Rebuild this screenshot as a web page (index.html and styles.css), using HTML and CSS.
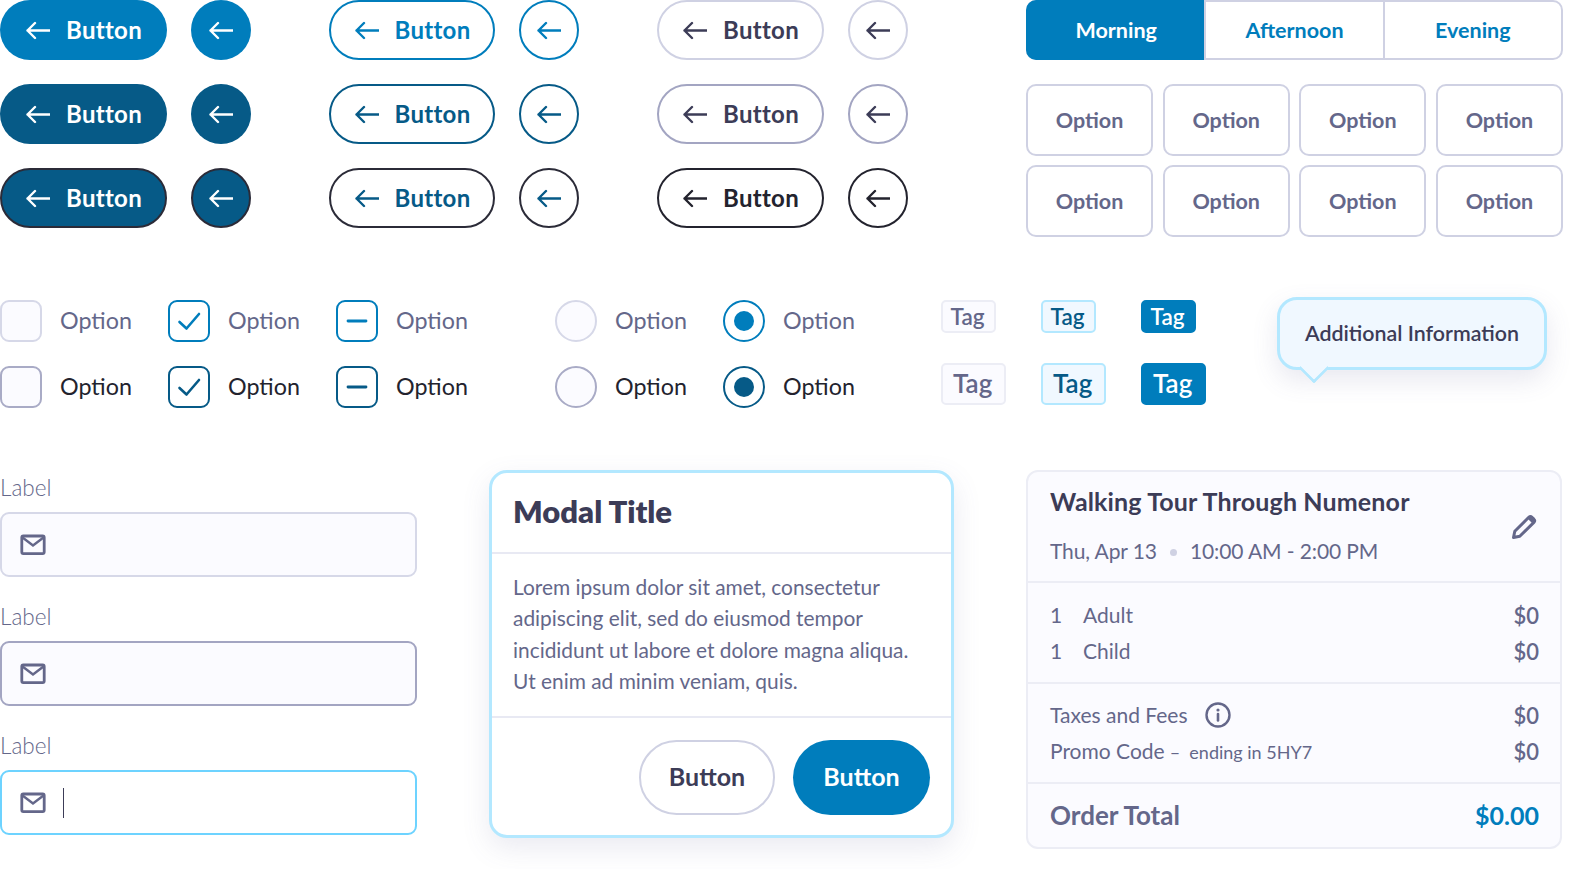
FILE: index.html
```html
<!DOCTYPE html>
<html lang="en">
<head>
<meta charset="utf-8">
<title>UI Kit</title>
<link rel="stylesheet" href="styles.css">
</head>
<body>
<svg class="sprite" aria-hidden="true">
  <symbol id="arrow" viewBox="0 0 24 24"><path d="M24 12.500H1.500M9 5l-7.500 7.500 7.500 7.500" fill="none" stroke="currentColor" stroke-width="2.400" stroke-linecap="round" stroke-linejoin="round"/></symbol>
  <symbol id="mail" viewBox="0 0 26 22"><rect x="1.800" y="2" width="22.400" height="17.600" rx="1.500" fill="none" stroke="currentColor" stroke-width="2.800"/><path d="M2.500 3.500L13 11.500L23.500 3.500" fill="none" stroke="currentColor" stroke-width="2.400"/></symbol>
</svg>
<main class="board">
  <section class="row-top">
    <div class="btn-group">
      <a class="btn fill"><svg class="ico"><use href="#arrow"/></svg><span>Button</span></a><a class="round fill"><svg class="ico"><use href="#arrow"/></svg></a>
      <a class="btn fill-dark"><svg class="ico"><use href="#arrow"/></svg><span>Button</span></a><a class="round fill-dark"><svg class="ico"><use href="#arrow"/></svg></a>
      <a class="btn fill-ink"><svg class="ico"><use href="#arrow"/></svg><span>Button</span></a><a class="round fill-ink"><svg class="ico"><use href="#arrow"/></svg></a>
    </div>
    <div class="btn-group">
      <a class="btn line-blue"><svg class="ico"><use href="#arrow"/></svg><span>Button</span></a><a class="round line-blue"><svg class="ico"><use href="#arrow"/></svg></a>
      <a class="btn line-dark"><svg class="ico"><use href="#arrow"/></svg><span>Button</span></a><a class="round line-dark"><svg class="ico"><use href="#arrow"/></svg></a>
      <a class="btn line-ink"><svg class="ico"><use href="#arrow"/></svg><span>Button</span></a><a class="round line-ink"><svg class="ico"><use href="#arrow"/></svg></a>
    </div>
    <div class="btn-group">
      <a class="btn plain-1"><svg class="ico"><use href="#arrow"/></svg><span>Button</span></a><a class="round plain-1"><svg class="ico"><use href="#arrow"/></svg></a>
      <a class="btn plain-2"><svg class="ico"><use href="#arrow"/></svg><span>Button</span></a><a class="round plain-2"><svg class="ico"><use href="#arrow"/></svg></a>
      <a class="btn plain-3"><svg class="ico"><use href="#arrow"/></svg><span>Button</span></a><a class="round plain-3"><svg class="ico"><use href="#arrow"/></svg></a>
    </div>
    <div class="selectors">
      <div class="segments">
        <span class="segment on">Morning</span><span class="segment">Afternoon</span><span class="segment">Evening</span>
      </div>
      <div class="options">
        <span class="opt">Option</span><span class="opt">Option</span><span class="opt">Option</span><span class="opt">Option</span>
        <span class="opt">Option</span><span class="opt">Option</span><span class="opt">Option</span><span class="opt">Option</span>
      </div>
    </div>
  </section>

  <section class="row-mid">
    <div class="checks">
      <label class="choice"><i class="box"></i>Option</label>
      <label class="choice"><i class="box blue"><svg viewBox="0 0 42 42"><path d="M11.500 22l7 6.500L31 14" fill="none" stroke="currentColor" stroke-width="2.600" stroke-linecap="round" stroke-linejoin="round"/></svg></i>Option</label>
      <label class="choice"><i class="box blue"><svg viewBox="0 0 42 42"><path d="M12 21H30" fill="none" stroke="currentColor" stroke-width="2.800" stroke-linecap="round"/></svg></i>Option</label>
      <label class="choice hover"><i class="box"></i>Option</label>
      <label class="choice hover"><i class="box dark"><svg viewBox="0 0 42 42"><path d="M11.500 22l7 6.500L31 14" fill="none" stroke="currentColor" stroke-width="2.600" stroke-linecap="round" stroke-linejoin="round"/></svg></i>Option</label>
      <label class="choice hover"><i class="box dark"><svg viewBox="0 0 42 42"><path d="M12 21H30" fill="none" stroke="currentColor" stroke-width="2.800" stroke-linecap="round"/></svg></i>Option</label>
    </div>
    <div class="radios">
      <label class="choice"><i class="radio"></i>Option</label>
      <label class="choice"><i class="radio blue"></i>Option</label>
      <label class="choice hover"><i class="radio"></i>Option</label>
      <label class="choice hover"><i class="radio dark"></i>Option</label>
    </div>
    <div class="tags">
      <span class="tag">Tag</span><span class="tag sky">Tag</span><span class="tag solid">Tag</span>
      <span class="tag big">Tag</span><span class="tag big sky">Tag</span><span class="tag big solid">Tag</span>
    </div>
    <div class="tooltip">Additional Information</div>
  </section>

  <section class="row-low">
    <div class="fields">
      <div class="field"><div class="label">Label</div><div class="input"><svg class="mail"><use href="#mail"/></svg></div></div>
      <div class="field"><div class="label">Label</div><div class="input hover"><svg class="mail"><use href="#mail"/></svg></div></div>
      <div class="field"><div class="label">Label</div><div class="input focus"><svg class="mail"><use href="#mail"/></svg><i class="caret"></i></div></div>
    </div>
    <article class="modal">
      <h2 class="modal-title">Modal Title</h2>
      <p class="modal-body">Lorem ipsum dolor sit amet, consectetur adipiscing elit, sed do eiusmod tempor incididunt ut labore et dolore magna aliqua. Ut enim ad minim veniam, quis.</p>
      <div class="modal-foot"><a class="mbtn ghost">Button</a><a class="mbtn primary">Button</a></div>
    </article>
    <article class="summary">
      <header class="sum-head">
        <div>
          <h3 class="sum-title">Walking Tour Through Numenor</h3>
          <div class="sum-when"><span>Thu, Apr 13</span><i class="dot"></i><span>10:00 AM - 2:00 PM</span></div>
        </div>
        <svg class="pencil" viewBox="0 0 26 26"><path d="M2.500 23.500l1.300-6.200L17.800 3.300a2.300 2.300 0 0 1 3.200 0l1.900 1.900a2.300 2.300 0 0 1 0 3.200L8.800 22.300z" fill="none" stroke="currentColor" stroke-width="3" stroke-linejoin="round"/><path d="M16.500 4.500l5 5L24 7l-.5-3.200L20 2z" fill="currentColor"/></svg>
      </header>
      <div class="sum-part first">
        <div class="line"><span><b class="qty">1</b>Adult</span><span class="price">$0</span></div>
        <div class="line"><span><b class="qty">1</b>Child</span><span class="price">$0</span></div>
      </div>
      <div class="sum-part">
        <div class="line"><span class="with-icon">Taxes and Fees<svg class="info" viewBox="0 0 26 26"><circle cx="13" cy="13" r="11.500" fill="none" stroke="currentColor" stroke-width="2.400"/><path d="M13 12v6.500" stroke="currentColor" stroke-width="2.600" stroke-linecap="round"/><circle cx="13" cy="8" r="1.600" fill="currentColor"/></svg></span><span class="price">$0</span></div>
        <div class="line"><span>Promo Code<small class="promo">–&nbsp; ending in 5HY7</small></span><span class="price">$0</span></div>
      </div>
      <footer class="sum-total"><span>Order Total</span><span class="total">$0.00</span></footer>
    </article>
  </section>
</main>
</body>
</html>
```

FILE: styles.css
```css
* { box-sizing: border-box; }
html, body { margin: 0; padding: 0; background: #fff; }
body { font-family: "Lato", "Noto Sans", sans-serif; color: #3c3c57; overflow: hidden; height: 869px; }
.sprite { display: none; }
.board { width: 1571px; height: 869px; }
h2, h3, p { margin: 0; }

/* top row */
.row-top { display: flex; height: 297px; }
.btn-group { display: grid; grid-template-columns: 166.500px 60px; gap: 24px; align-content: start; margin-right: 78px; }
.btn-group:nth-child(3) { margin-right: 118.500px; }
.btn, .round { height: 60px; display: flex; align-items: center; border-radius: 30px; border: 2px solid transparent; font-weight: 700; font-size: 24px; letter-spacing: .3px; }
.btn { padding: 0 0 2px 24px; gap: 16px; }
.round { width: 60px; justify-content: center; }
.ico { width: 24px; height: 24px; flex: none; }
.btn .ico { margin-top: 2px; }
.fill { background: #007dbc; color: #fff; }
.fill-dark { background: #065a87; color: #fff; }
.fill-ink { background: #065a87; color: #fff; border-color: #2b2b38; }
.line-blue { color: #007dbc; border-color: #007dbc; }
.line-dark { color: #065a87; border-color: #065a87; }
.line-ink { color: #065a87; border-color: #2b2b38; }
.plain-1 { color: #3c3c57; border-color: #cfd1e3; }
.plain-2 { color: #3c3c57; border-color: #a3a5c2; }
.plain-3 { color: #23232e; border-color: #23232e; }

.selectors { width: 537px; }
.segments { display: flex; height: 60px; border: 2px solid #cfd1e3; border-radius: 10px; }
.segment { flex: 1; display: flex; align-items: center; justify-content: center; font-weight: 700; font-size: 21.500px; color: #007dbc; }
.segment + .segment { border-left: 2px solid #cfd1e3; }
.segment.on { background: #007dbc; color: #fff; margin: -2px 0 -2px -2px; padding-left: 2px; border-radius: 10px 0 0 10px; }
.options { display: grid; grid-template-columns: repeat(4, 1fr); gap: 9px 9.500px; margin-top: 24px; }
.opt { height: 72px; display: flex; align-items: center; justify-content: center; border: 2px solid #cfd1e3; border-radius: 10px; font-weight: 700; font-size: 21.500px; color: #64678a; }

/* middle row */
.row-mid { display: flex; height: 173px; align-items: flex-start; }
.checks { display: grid; grid-template-columns: repeat(3, 168px); gap: 24px 0; width: 555px; margin-top: 3px; }
.radios { display: grid; grid-template-columns: repeat(2, 168px); gap: 24px 0; width: 386px; margin-top: 3px; }
.choice { display: flex; align-items: center; gap: 18px; height: 42px; padding-bottom: 2px; font-size: 23.300px; color: #64678a; line-height: 40px; }
.choice.hover { color: #23232e; }
.box, .radio { width: 42px; height: 42px; margin-bottom: -2px; flex: none; background: #fbfbff; border: 2px solid #d6d8e8; display: block; }
.box { border-radius: 9px; }
.radio { border-radius: 50%; }
.hover .box, .hover .radio { border-color: #a9abc6; }
.box.blue, .box.dark, .radio.blue, .radio.dark { background: #fff; }
.box svg { display: block; margin: -2px; width: 42px; height: 42px; }
.hover .box.dark, .hover .radio.dark { border-color: #065a87; color: #065a87; }
.box.blue, .radio.blue { border-color: #007dbc; color: #007dbc; }
.radio.blue, .radio.dark { position: relative; }
.radio.blue::after, .radio.dark::after { content: ""; position: absolute; inset: 9px; border-radius: 50%; background: currentColor; }
.tags { display: grid; grid-template-columns: repeat(3, 100px); row-gap: 30px; width: 336px; margin-top: 3px; justify-items: start; }
.tag { height: 33px; padding: 0 9.500px 0 7.500px; display: flex; align-items: center; border-radius: 5px; background: #fbfbff; border: 2px solid #ecedf5; color: #64678a; font-size: 22.500px; font-weight: 600; line-height: 30px; }
.tag.big { height: 42px; padding: 0 12px 2px 10px; font-size: 26px; }
.tag.sky { background: #f0f8ff; border-color: #b3e8ff; color: #065a87; }
.tag.solid { background: #007dbc; border-color: #007dbc; color: #fff; }
.tooltip { position: relative; width: 270px; height: 73px; padding-bottom: 2px; display: flex; align-items: center; justify-content: center; background: #f0f8ff; border: 3px solid #b3e8ff; border-radius: 20px; font-size: 21.400px; font-weight: 600; color: #3c3c57; box-shadow: 0 10px 26px rgba(90, 90, 150, .14); }
.tooltip::after { content: ""; position: absolute; left: 23px; bottom: -12px; width: 19px; height: 19px; background: #f0f8ff; border: solid #b3e8ff; border-width: 0 3px 3px 0; transform: rotate(45deg); border-bottom-right-radius: 2px; }

/* lower row */
.row-low { display: flex; align-items: flex-start; }
.fields { width: 417px; margin-right: 72px; }
.field { margin-bottom: 22px; }
.label { height: 42px; line-height: 36px; font-size: 22.500px; font-weight: 300; color: #64678a; }
.input { height: 65px; display: flex; align-items: center; gap: 17px; padding-left: 18px; border: 2px solid #d6d8e8; border-radius: 9px; background: #fbfbff; color: #64678a; }
.input.hover { border-color: #a3a5c2; }
.input.focus { background: #fff; border-color: #6dd3ff; }
.mail { width: 26px; height: 22px; flex: none; }
.caret { width: 1px; height: 30px; background: #3c3c57; }
.modal { width: 465px; height: 368px; margin-right: 72px; border: 3px solid #b3e8ff; border-radius: 18px; background: #fff; box-shadow: 0 10px 28px rgba(90, 90, 150, .13); display: flex; flex-direction: column; }
.modal-title { height: 81px; padding: 0 21px; line-height: 76px; font-size: 31px; font-weight: 800; color: #3c3c57; border-bottom: 2px solid #e8e9f3; }
.modal-body { height: 164px; padding: 16.500px 21px 0; font-size: 20.900px; line-height: 31.500px; color: #64678a; border-bottom: 2px solid #e8e9f3; }
.modal-foot { flex: 1; display: flex; justify-content: flex-end; gap: 18px; padding: 22px 21px 0 0; }
.mbtn { width: 136px; height: 75px; padding-bottom: 3px; display: flex; align-items: center; justify-content: center; border-radius: 38px; font-size: 25px; font-weight: 700; }
.ghost { border: 2px solid #cfd1e3; color: #3c3c57; }
.primary { width: 137px; background: #007dbc; color: #fff; }

.summary { width: 536px; height: 379px; border: 2px solid #ecedf5; border-radius: 12px; background: #fbfbff; color: #64678a; font-size: 21px; }
.sum-head { height: 111px; padding: 14px 21px 0 22px; display: flex; justify-content: space-between; align-items: flex-start; border-bottom: 2px solid #ecedf5; }
.sum-title { font-size: 25px; letter-spacing: .15px; font-weight: 700; color: #3c3c57; line-height: 30px; }
.sum-when { margin-top: 20px; display: flex; align-items: center; line-height: 30px; letter-spacing: -.1px; }
.dot { width: 7px; height: 7px; border-radius: 50%; background: #cfd1e3; margin: 2px 13px 0; }
.pencil { width: 26px; height: 26px; color: #64678a; margin: 28px 2px 0 0; flex: none; }
.sum-part { height: 100px; padding: 12px 21px 0 22px; border-bottom: 2px solid #ecedf5; }
.sum-part.first { height: 101px; padding-top: 13px; }
.line { height: 36px; display: flex; justify-content: space-between; align-items: center; }
.qty { display: inline-block; width: 33px; font-weight: 400; }
.price { padding-top: 2px; font-weight: 600; font-size: 22px; }
.with-icon { display: flex; align-items: center; gap: 17px; }
.info { width: 26px; height: 26px; margin-top: 2px; }
.promo { font-size: 18px; margin-left: 5px; }
.sum-total { height: 63px; padding: 0 21px 2px 22px; display: flex; justify-content: space-between; align-items: center; font-size: 26px; font-weight: 700; }
.total { color: #007dbc; font-size: 25px; }
```
